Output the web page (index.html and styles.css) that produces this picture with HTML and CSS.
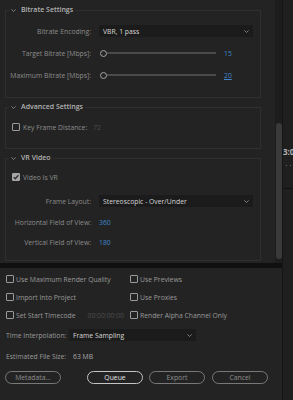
FILE: index.html
```html
<!DOCTYPE html>
<html>
<head>
<meta charset="utf-8">
<link rel="stylesheet" href="styles.css">
</head>
<body>
<div class="app">
  <div class="dialog">
    <div class="top">
      <div class="scroll">
        <fieldset class="sec sec-bitrate">
          <legend><svg class="chev" width="5" height="3" viewBox="0 0 5 3"><path d="M0.4 0.4 L2.5 2.5 L4.6 0.4" stroke="#8a8a8a" stroke-width="0.9" fill="none"/></svg>Bitrate Settings</legend>
          <div class="row">
            <span class="lbl">Bitrate Encoding:</span>
            <div class="select"><span>VBR, 1 pass</span><svg width="5" height="3" viewBox="0 0 5 3"><path d="M0.4 0.4 L2.5 2.5 L4.6 0.4" stroke="#8a8a8a" stroke-width="0.9" fill="none"/></svg></div>
          </div>
          <div class="row">
            <span class="lbl">Target Bitrate [Mbps]:</span>
            <div class="ctl"><div class="slider"><span class="knob"></span><span class="track"></span></div><span class="val">15</span></div>
          </div>
          <div class="row">
            <span class="lbl">Maximum Bitrate [Mbps]:</span>
            <div class="ctl"><div class="slider"><span class="knob"></span><span class="track"></span></div><span class="val ul">20</span></div>
          </div>
        </fieldset>

        <fieldset class="sec sec-adv">
          <legend><svg class="chev" width="5" height="3" viewBox="0 0 5 3"><path d="M0.4 0.4 L2.5 2.5 L4.6 0.4" stroke="#8a8a8a" stroke-width="0.9" fill="none"/></svg>Advanced Settings</legend>
          <div class="crow">
            <span class="cb"></span><span class="clbl">Key Frame Distance:</span><span class="dim">72</span>
          </div>
        </fieldset>

        <fieldset class="sec sec-vr">
          <legend><svg class="chev" width="5" height="3" viewBox="0 0 5 3"><path d="M0.4 0.4 L2.5 2.5 L4.6 0.4" stroke="#8a8a8a" stroke-width="0.9" fill="none"/></svg>VR Video</legend>
          <div class="crow">
            <span class="cb on"><svg width="8" height="8" viewBox="0 0 8 8"><path d="M1.7 4.1 L3.3 5.7 L6.4 2.2" stroke="#2a2a2a" stroke-width="1.3" fill="none"/></svg></span><span class="clbl">Video Is VR</span>
          </div>
          <div class="row r-layout">
            <span class="lbl">Frame Layout:</span>
            <div class="select"><span>Stereoscopic - Over/Under</span><svg width="5" height="3" viewBox="0 0 5 3"><path d="M0.4 0.4 L2.5 2.5 L4.6 0.4" stroke="#8a8a8a" stroke-width="0.9" fill="none"/></svg></div>
          </div>
          <div class="row r-hfov">
            <span class="lbl">Horizontal Field of View:</span>
            <span class="val">360</span>
          </div>
          <div class="row r-vfov">
            <span class="lbl">Vertical Field of View:</span>
            <span class="val">180</span>
          </div>
        </fieldset>
      </div>
      <div class="vscroll"><div class="thumb"></div></div>
    </div>
    <div class="sep"></div>
    <div class="bottom">
      <div class="checks">
        <div class="citem"><span class="cb"></span><span>Use Maximum Render Quality</span></div>
        <div class="citem"><span class="cb"></span><span>Use Previews</span></div>
        <div class="citem"><span class="cb"></span><span>Import Into Project</span></div>
        <div class="citem"><span class="cb"></span><span>Use Proxies</span></div>
        <div class="citem"><span class="cb"></span><span>Set Start Timecode</span><span class="tc">00:00:00:00</span></div>
        <div class="citem"><span class="cb"></span><span>Render Alpha Channel Only</span></div>
      </div>
      <div class="interp">
        <span class="ilbl">Time Interpolation:</span>
        <div class="select isel"><span>Frame Sampling</span><svg width="5" height="3" viewBox="0 0 5 3"><path d="M0.4 0.4 L2.5 2.5 L4.6 0.4" stroke="#8a8a8a" stroke-width="0.9" fill="none"/></svg></div>
      </div>
      <div class="fsize">
        <span class="flbl">Estimated File Size:</span>
        <span class="fval">63 MB</span>
      </div>
      <div class="buttons">
        <button class="btn">Metadata...</button>
        <div class="group">
          <button class="btn primary">Queue</button>
          <button class="btn">Export</button>
          <button class="btn cancel">Cancel</button>
        </div>
      </div>
    </div>
  </div>
  <div class="behind">
    <div class="btime">3:0</div>
    <div class="bdots"><span></span><span></span></div>
    <div class="bline"></div>
  </div>
</div>
</body>
</html>
```

FILE: styles.css
```css
* { box-sizing: border-box; }
html, body { margin: 0; padding: 0; }
body {
  background: #232323;
  font-family: "Open Sans", "Liberation Sans", sans-serif;
  font-size: 6.8px;
  color: #8c8c8c;
  width: 293px;
  height: 400px;
  overflow: hidden;
}
.app { display: flex; height: 400px; }
.dialog { width: 282px; display: flex; flex-direction: column; }
.top { height: 263px; display: flex; }
.scroll { width: 275px; }
.vscroll { width: 7px; background: #1d1d1d; padding-top: 123px; }
.thumb { height: 136px; margin-left: 1px; width: 6px; background: #3a3a3a; border-radius: 3px; }
.sep { height: 5px; background: #101010; }

.sec {
  margin: 0 14px 0 5px;
  min-width: 0;
  border: 1px solid #2f2f2f;
  padding: 0 7px 0 0;
}
.sec legend {
  margin-left: 3px;
  padding: 0 2px;
  height: 12px;
  line-height: 12px;
  font-size: 7px;
  font-weight: 600;
  color: #b2b2b2;
  display: flex;
  align-items: center;
}
.chev { margin-right: 5px; }
.sec-bitrate { margin-top: 4px; padding-top: 9px; padding-bottom: 16px; display: flex; flex-direction: column; gap: 10px; }
.sec-adv { margin-top: 3px; padding-top: 8px; padding-bottom: 15px; }
.sec-vr { margin-top: 3px; padding-top: 7px; padding-bottom: 12px; }

.row {
  display: grid;
  grid-template-columns: 85px 1fr;
  column-gap: 8px;
  align-items: center;
  height: 12px;
}
.lbl { text-align: right; white-space: nowrap; }
.r-layout { margin-top: 12px; }
.r-hfov { margin-top: 9px; }
.r-vfov { margin-top: 8px; }

.select {
  height: 12px;
  background: #1b1b1b;
  color: #d6d6d6;
  display: flex;
  align-items: center;
  justify-content: space-between;
  padding: 0 4px 0 4px;
  white-space: nowrap;
}
.ctl { display: flex; align-items: center; }
.slider { width: 117px; display: flex; align-items: center; }
.knob {
  width: 7px; height: 7px;
  border: 1.2px solid #a3a3a3;
  border-radius: 50%;
  background: #262626;
  margin-left: 1px;
  flex: none;
}
.track { flex: 1; height: 1.5px; background: #4a4a4a; }
.val { color: #3f86cc; margin-left: 0; }
.ctl .val { margin-left: 8px; }
.ul { text-decoration: underline; }

.crow { display: flex; align-items: center; height: 12px; padding-left: 6px; }
.cb {
  width: 8px; height: 8px;
  border: 1px solid #9a9a9a;
  border-radius: 1px;
  flex: none;
  display: flex;
}
.cb.on { background: #a6a6a6; border-color: #a6a6a6; }
.cb.on svg { margin: -1px; }
.clbl { margin-left: 3px; }
.dim { margin-left: 6px; color: #4c4c4c; }

.bottom { flex: 1; padding: 5px 0 0 6px; color: #9a9a9a; }
.checks {
  display: grid;
  grid-template-columns: 124px 1fr;
  row-gap: 6px;
}
.citem { display: flex; align-items: center; height: 12px; gap: 2px; white-space: nowrap; }
.tc { margin-left: 10px; color: #4e4e4e; }

.interp { display: flex; align-items: center; margin-top: 8px; height: 12px; }
.ilbl { width: 63px; }
.isel { width: 127px; }
.fsize { display: flex; align-items: center; margin-top: 9px; height: 12px; }
.flbl { width: 67px; }
.fval { color: #a8a8a8; }

.buttons { display: flex; margin-top: 9px; margin-left: -1px; }
.group { display: flex; gap: 6px; margin-left: 26px; }
.btn {
  width: 56px; height: 13px;
  border: 1px solid #787878;
  border-radius: 7px;
  background: transparent;
  color: #8e8e8e;
  font-family: "Open Sans", "Liberation Sans", sans-serif;
  font-size: 6.8px;
  padding: 0;
  line-height: 11px;
}
.btn.primary { border-color: #c4c4c4; color: #e4e4e4; }
.btn.cancel { margin-left: 1px; }

.behind {
  width: 11px;
  background: #1f1f1f;
  border-left: 1px solid #151515;
  overflow: hidden;
  padding-top: 147px;
}
.btime { font-size: 8px; font-weight: 700; color: #b5b5b5; line-height: 10px; white-space: nowrap; }
.bdots { display: flex; gap: 3px; margin-top: 8px; padding-left: 3px; }
.bdots span { width: 1px; height: 1px; background: #666; }
.bline { margin-top: 22px; height: 1px; background: #111; }
```
